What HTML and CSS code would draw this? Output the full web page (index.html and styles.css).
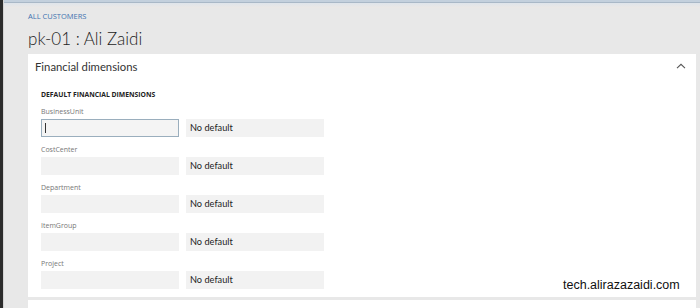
FILE: index.html
```html
<!DOCTYPE html>
<html>
<head>
<meta charset="utf-8">
<link rel="stylesheet" href="styles.css">
</head>
<body>
<div class="frame">
  <div class="strip"></div>
  <div class="main">
    <div class="topbar"></div>
    <div class="page">
      <div class="crumb">ALL CUSTOMERS</div>
      <h1 class="title">pk-01 : Ali Zaidi</h1>
      <section class="card">
        <div class="card-head">
          <span class="card-title">Financial dimensions</span>
          <svg class="chev" width="10" height="6" viewBox="0 0 10 6"><path d="M1 5.2 L5 1.3 L9 5.2" fill="none" stroke="#555" stroke-width="1.1"/></svg>
        </div>
        <div class="card-body">
          <div class="group-title">DEFAULT FINANCIAL DIMENSIONS</div>
          <div class="row">
            <div class="label">BusinessUnit</div>
            <div class="fields">
              <div class="input focus"><span class="caret"></span></div>
              <div class="value">No default</div>
            </div>
          </div>
          <div class="row">
            <div class="label">CostCenter</div>
            <div class="fields">
              <div class="input"></div>
              <div class="value">No default</div>
            </div>
          </div>
          <div class="row">
            <div class="label">Department</div>
            <div class="fields">
              <div class="input"></div>
              <div class="value">No default</div>
            </div>
          </div>
          <div class="row">
            <div class="label">ItemGroup</div>
            <div class="fields">
              <div class="input"></div>
              <div class="value">No default</div>
            </div>
          </div>
          <div class="row">
            <div class="label">Project</div>
            <div class="fields">
              <div class="input"></div>
              <div class="value">No default</div>
            </div>
          </div>
        </div>
      </section>
      <section class="card next"></section>
    </div>
  </div>
  <div class="watermark">tech.alirazazaidi.com</div>
</div>
</body>
</html>
```
FILE: styles.css
```css
html, body {
  margin: 0;
  padding: 0;
}
body {
  width: 700px;
  height: 308px;
  overflow: hidden;
  background: #e8e8e8;
  font-family: "Open Sans", "Noto Sans", sans-serif;
}
.frame {
  position: relative;
  display: flex;
  width: 700px;
  height: 308px;
}
.strip {
  width: 3px;
  flex: none;
  background: #2c2c2c;
  border-right: 1px solid #d4d4d4;
}
.main {
  flex: 1;
  display: flex;
  flex-direction: column;
  background: #e8e8e8;
}
.topbar {
  height: 8px;
  flex: none;
  border-top: 2px solid #c3d0dd;
  box-sizing: border-box;
  background: linear-gradient(#a9b8c7 0, #a9b8c7 1px, #dfe5eb 1px, #ebe8e6 100%);
}
.page {
  padding-left: 24px;
  padding-right: 4px;
}
.crumb {
  margin-top: 3px;
  height: 10px;
  line-height: 10px;
  font-size: 7.5px;
  color: #3f73b0;
}
.title {
  margin: 6px 0 0 0;
  height: 24px;
  line-height: 24px;
  font-family: "Lato", "Open Sans", sans-serif;
  font-size: 17px;
  font-weight: 300;
  color: #222;
}
.card {
  margin-top: 3px;
  background: #fff;
}
.card-head {
  height: 24px;
  display: flex;
  align-items: center;
  justify-content: space-between;
  padding: 0 10px 0 7px;
}
.card-title {
  font-family: "Lato", "Open Sans", sans-serif;
  font-size: 11.3px;
  color: #333;
}
.card-body {
  padding: 12px 0 8px 13px;
}
.group-title {
  height: 10px;
  line-height: 10px;
  font-size: 6.8px;
  font-weight: 700;
  color: #222;
  margin-bottom: 6px;
}
.row {
  margin-bottom: 7px;
}
.row:last-child {
  margin-bottom: 0;
}
.label {
  height: 12px;
  line-height: 12px;
  font-size: 7px;
  color: #777;
  margin-bottom: 1px;
}
.fields {
  display: flex;
  gap: 7px;
}
.input {
  width: 138px;
  height: 18px;
  box-sizing: border-box;
  background: #f2f2f2;
  position: relative;
}
.input.focus {
  background: #f4f4f4;
  border: 1px solid #9aaebd;
}
.caret {
  position: absolute;
  left: 3px;
  top: 3px;
  width: 1px;
  height: 10px;
  background: #333;
}
.value {
  width: 138px;
  height: 18px;
  box-sizing: border-box;
  background: #f2f2f2;
  font-family: "Lato", "Open Sans", sans-serif;
  font-size: 9.2px;
  line-height: 18px;
  padding-left: 4px;
  color: #222;
}
.next {
  margin-top: 3px;
  height: 20px;
}
.watermark {
  position: absolute;
  left: 563px;
  top: 276px;
  font-family: "Liberation Sans", Arial, sans-serif;
  font-size: 12.5px;
  line-height: 18px;
  color: #111;
}
```
